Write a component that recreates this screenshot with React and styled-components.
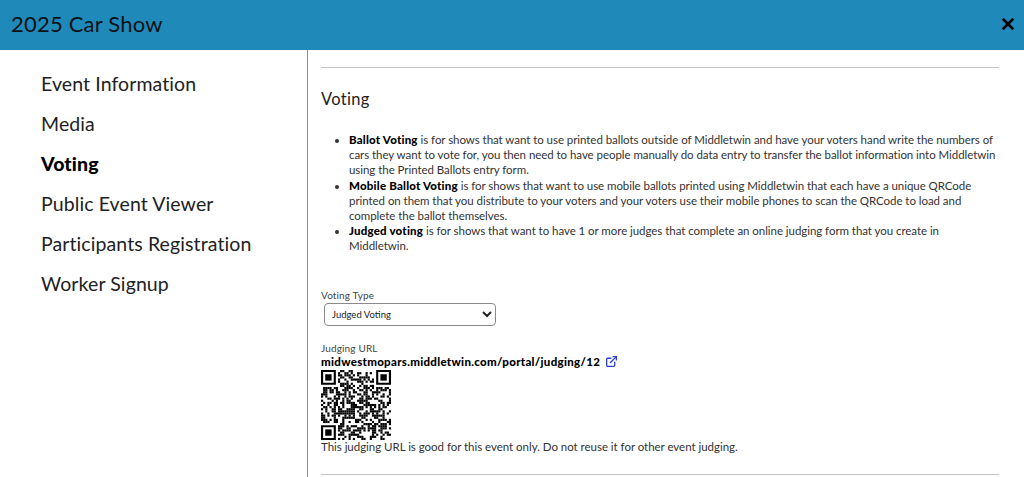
import React from "react";
import styled, { createGlobalStyle } from "styled-components";
import { X, ExternalLink } from "lucide-react";

const Global = createGlobalStyle`
  html, body { margin: 0; padding: 0; background: #fff; height: 100%; overflow: hidden; }
  body { font-family: Lato, "Open Sans", sans-serif; color: #1d1d1f; }
`;

const Page = styled.div`
  width: 1024px;
  height: 477px;
  display: flex;
  flex-direction: column;
  overflow: hidden;
`;

const Header = styled.header`
  flex: 0 0 50px;
  box-sizing: border-box;
  background: #1f8aba;
  display: flex;
  align-items: center;
  justify-content: space-between;
  padding: 0 7px 3px 11px;
`;

const Title = styled.h1`
  margin: 0;
  font-size: 22px;
  font-weight: 400;
  letter-spacing: 0.2px;
  color: #0c1114;
`;

const Close = styled.button`
  border: 0;
  padding: 0;
  background: none;
  display: flex;
  color: #000;
`;

const Body = styled.div`
  flex: 1;
  display: flex;
  min-height: 0;
`;

const Side = styled.nav`
  flex: 0 0 308px;
  box-sizing: border-box;
  border-right: 1px solid #8f8f8f;
  padding: 14px 0 0 41px;
  display: flex;
  flex-direction: column;
`;

const NavItem = styled.a`
  height: 40px;
  line-height: 40px;
  font-size: 19.5px;
  letter-spacing: 0.1px;
  font-weight: ${(p) => (p.$active ? 900 : 400)};
  color: ${(p) => (p.$active ? "#000" : "#222")};
`;

const Main = styled.main`
  flex: 1;
  padding: 17px 25px 0 13px;
  min-width: 0;
`;

const Rule = styled.hr`
  margin: 0;
  border: 0;
  border-top: 1px solid #c4c4c4;
`;

const Heading = styled.h2`
  margin: 21px 0 0;
  font-size: 16.5px;
  line-height: 20px;
  font-weight: 400;
  letter-spacing: 0.3px;
  color: #222;
`;

const List = styled.ul`
  margin: 23px 0 0;
  padding: 0 0 0 28px;
  font-size: 11.5px;
  line-height: 15.2px;
  letter-spacing: -0.05px;
  color: #333;
  & b { color: #000; font-weight: 900; letter-spacing: 0.2px; }
`;

const Field = styled.div`
  margin-top: 35px;
  font-size: 10px;
  line-height: 13px;
  letter-spacing: 0.12px;
  color: #444;
`;

const Select = styled.select`
  display: block;
  width: 172px;
  height: 23px;
  margin: 1px 0 0 3px;
  padding: 0 2px 0 3px;
  background: #fff;
  border: 1px solid #8a8a8a;
  border-radius: 4px;
  font-family: Lato, sans-serif;
  font-size: 9.5px;
  color: #222;
`;

const UrlLabel = styled.div`
  margin-top: 16px;
  font-size: 10px;
  line-height: 12px;
  letter-spacing: 0.15px;
  color: #444;
`;

const UrlRow = styled.div`
  display: flex;
  align-items: center;
  gap: 5px;
  height: 16px;
  font-size: 11.5px;
  font-weight: 900;
  letter-spacing: 0.3px;
  color: #000;
  & svg { color: #2b3fe0; }
`;

const Qr = styled.svg`
  display: block;
  width: 70px;
  height: 70px;
`;

const Note = styled.div`
  font-size: 11.5px;
  line-height: 13px;
  letter-spacing: -0.03px;
  color: #333;
`;

const BottomRule = styled(Rule)`
  margin-top: 21px;
`;

const SIZE = 33;
function qrCells() {
  const cells = [];
  const inFinder = (x, y) =>
    (x < 8 && y < 8) || (x >= SIZE - 8 && y < 8) || (x < 8 && y >= SIZE - 8);
  let seed = 20250;
  for (let y = 0; y < SIZE; y++) {
    for (let x = 0; x < SIZE; x++) {
      seed = (seed * 1103515245 + 12345) & 0x7fffffff;
      if (!inFinder(x, y) && ((seed >> 16) & 1)) cells.push([x, y]);
    }
  }
  return cells;
}
const cells = qrCells();

const Finder = ({ x, y }) => (
  <g>
    <path d={`M${x} ${y}h7v7h-7z M${x + 1} ${y + 1}v5h5v-5z`} fill="#000" fillRule="evenodd" />
    <rect x={x + 2} y={y + 2} width="3" height="3" fill="#000" />
  </g>
);

const navItems = [
  "Event Information",
  "Media",
  "Voting",
  "Public Event Viewer",
  "Participants Registration",
  "Worker Signup",
];

export default function App() {
  return (
    <Page>
      <Global />
      <Header>
        <Title>2025 Car Show</Title>
        <Close aria-label="Close">
          <X size={18} strokeWidth={3.4} />
        </Close>
      </Header>
      <Body>
        <Side>
          {navItems.map((n) => (
            <NavItem key={n} $active={n === "Voting"}>{n}</NavItem>
          ))}
        </Side>
        <Main>
          <Rule />
          <Heading>Voting</Heading>
          <List>
            <li>
              <b>Ballot Voting</b> is for shows that want to use printed ballots outside of Middletwin and have your voters hand write the numbers of cars they want to vote for, you then need to have people manually do data entry to transfer the ballot information into Middletwin using the Printed Ballots entry form.
            </li>
            <li>
              <b>Mobile Ballot Voting</b> is for shows that want to use mobile ballots printed using Middletwin that each have a unique QRCode printed on them that you distribute to your voters and your voters use their mobile phones to scan the QRCode to load and complete the ballot themselves.
            </li>
            <li>
              <b>Judged voting</b> is for shows that want to have 1 or more judges that complete an online judging form that you create in Middletwin.
            </li>
          </List>
          <Field>Voting Type</Field>
          <Select defaultValue="Judged Voting">
            <option>Judged Voting</option>
          </Select>
          <UrlLabel>Judging URL</UrlLabel>
          <UrlRow>
            midwestmopars.middletwin.com/portal/judging/12
            <ExternalLink size={13} strokeWidth={2.4} />
          </UrlRow>
          <Qr viewBox={`0 0 ${SIZE} ${SIZE}`}>
            {cells.map(([x, y]) => (
              <rect key={`${x}-${y}`} x={x} y={y} width="1.02" height="1.02" fill="#000" />
            ))}
            <Finder x={0} y={0} />
            <Finder x={SIZE - 7} y={0} />
            <Finder x={0} y={SIZE - 7} />
          </Qr>
          <Note>This judging URL is good for this event only. Do not reuse it for other event judging.</Note>
          <BottomRule />
        </Main>
      </Body>
    </Page>
  );
}
